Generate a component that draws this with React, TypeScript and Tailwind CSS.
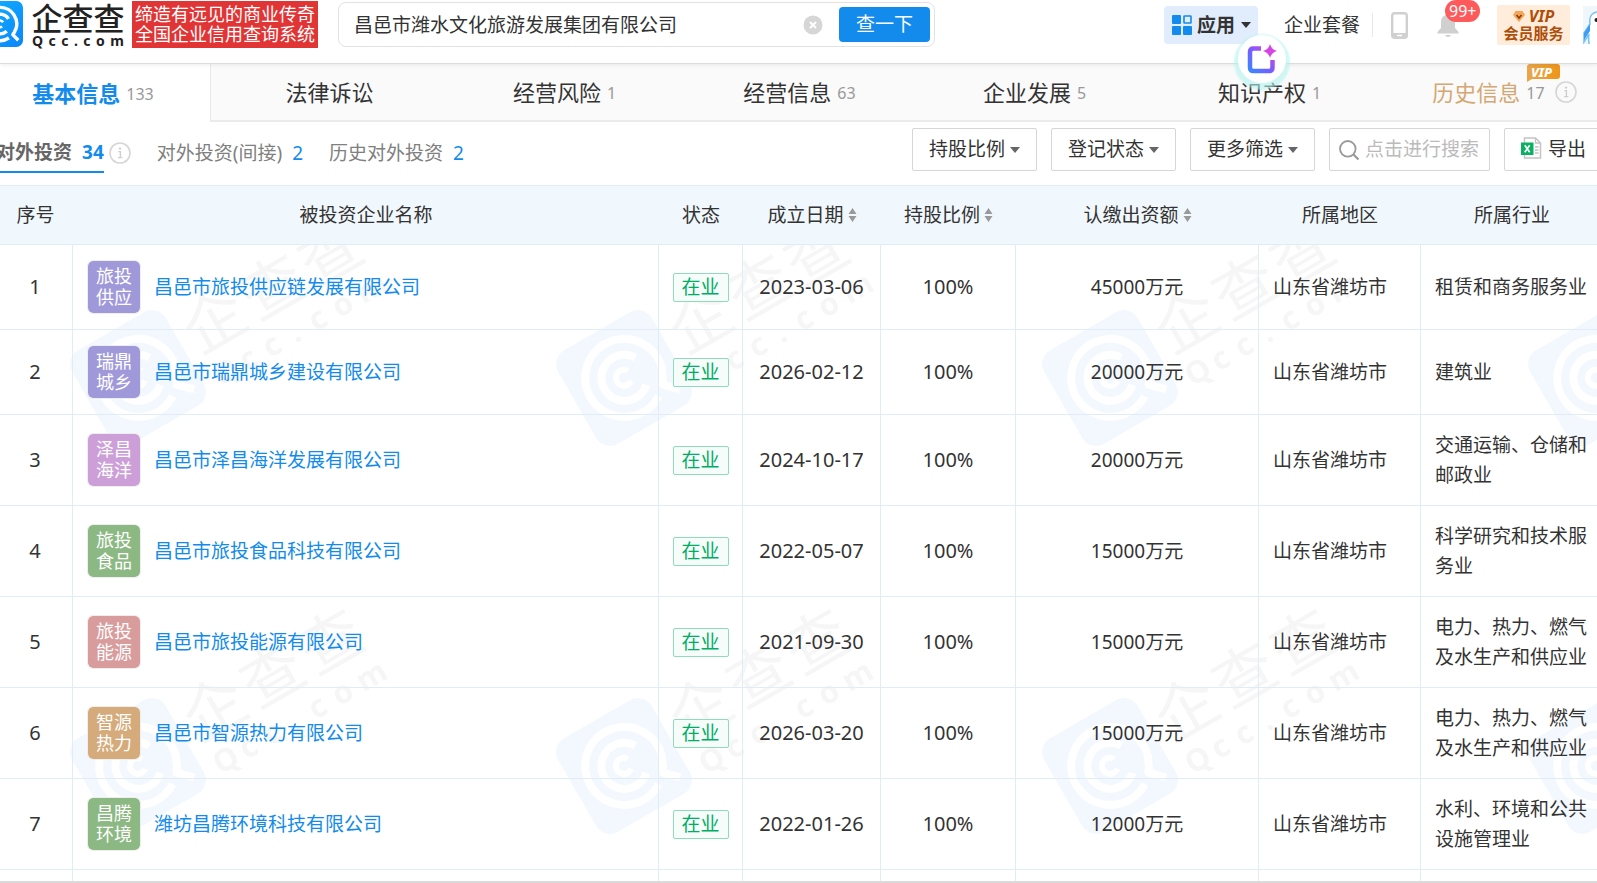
import type { ReactNode } from "react";

const tabs = [
  { name: "基本信息", count: "133" },
  { name: "法律诉讼", count: "" },
  { name: "经营风险", count: "1" },
  { name: "经营信息", count: "63" },
  { name: "企业发展", count: "5" },
  { name: "知识产权", count: "1" },
  { name: "历史信息", count: "17" },
];

const filters = ["持股比例", "登记状态", "更多筛选"];

const columns = [
  { name: "序号", width: "w-[73px]", sortable: false },
  { name: "被投资企业名称", width: "", sortable: false },
  { name: "状态", width: "w-[84px]", sortable: false },
  { name: "成立日期", width: "w-[138px]", sortable: true },
  { name: "持股比例", width: "w-[135px]", sortable: true },
  { name: "认缴出资额", width: "w-[243px]", sortable: true },
  { name: "所属地区", width: "w-[162px]", sortable: false },
  { name: "所属行业", width: "w-[176px]", sortable: false },
];

const companies = [
  { short: ["旅投", "供应"], color: "bg-[#9f99da]", name: "昌邑市旅投供应链发展有限公司", date: "2023-03-06", amount: "45000万元", industry: "租赁和商务服务业" },
  { short: ["瑞鼎", "城乡"], color: "bg-[#9f99da]", name: "昌邑市瑞鼎城乡建设有限公司", date: "2026-02-12", amount: "20000万元", industry: "建筑业" },
  { short: ["泽昌", "海洋"], color: "bg-[#cc9fd8]", name: "昌邑市泽昌海洋发展有限公司", date: "2024-10-17", amount: "20000万元", industry: "交通运输、仓储和邮政业" },
  { short: ["旅投", "食品"], color: "bg-[#8cb883]", name: "昌邑市旅投食品科技有限公司", date: "2022-05-07", amount: "15000万元", industry: "科学研究和技术服务业" },
  { short: ["旅投", "能源"], color: "bg-[#d99c9c]", name: "昌邑市旅投能源有限公司", date: "2021-09-30", amount: "15000万元", industry: "电力、热力、燃气及水生产和供应业" },
  { short: ["智源", "热力"], color: "bg-[#d5ab7b]", name: "昌邑市智源热力有限公司", date: "2026-03-20", amount: "15000万元", industry: "电力、热力、燃气及水生产和供应业" },
  { short: ["昌腾", "环境"], color: "bg-[#8cb883]", name: "潍坊昌腾环境科技有限公司", date: "2022-01-26", amount: "12000万元", industry: "水利、环境和公共设施管理业" },
];

// Rings of the brand mark, drawn around 0,0 in a 108 unit square
const LogoMark = ({ fill, line }: { fill: string; line: string }) => (
  <g fill="none" stroke={line}>
    <rect x="-54" y="-54" width="108" height="108" rx="16" fill={fill} stroke="none" />
    <path d="M21 33 A39 39 0 1 1 37 13" strokeWidth="8" />
    <path d="M37 11 A39 39 0 0 1 30 25 L43 38" strokeWidth="8" strokeLinejoin="round" />
    <path d="M20 -12 A23 23 0 1 0 16 17" strokeWidth="8" />
    <path d="M7 -4 A8 8 0 1 0 5 6" strokeWidth="6" />
  </g>
);

const Watermark = () => (
  <svg className="absolute inset-0 size-full" aria-hidden="true">
    <defs>
      <pattern id="mark" x="60" y="-9" width="486" height="388" patternUnits="userSpaceOnUse">
        <g transform="translate(78 202) rotate(-30)">
          <LogoMark fill="#f2f8fe" line="#ffffff" />
          <g fill="#f6f6f6">
            <text x="64 131 198" y="11" fontSize="62">企查查</text>
            <text x="67 97 124 154 177 204 232" y="49" fontSize="31" fontWeight="700">Qcc.com</text>
          </g>
        </g>
      </pattern>
    </defs>
    <rect width="100%" height="100%" fill="url(#mark)" />
  </svg>
);

const Caret = ({ className }: { className: string }) => (
  <svg viewBox="0 0 10 6" className={`h-1.5 w-2.5 ${className}`} aria-hidden="true">
    <path d="M0 0H10L5 6Z" fill="currentColor" />
  </svg>
);

const InfoIcon = () => (
  <svg viewBox="0 0 22 22" className="size-[22px] shrink-0" aria-hidden="true">
    <circle cx="11" cy="11" r="10" fill="none" stroke="#d6d6d6" strokeWidth="1.6" />
    <circle cx="11" cy="6.6" r="1.2" fill="#cfcfcf" />
    <path d="M9.3 9.6H11.4V15.5M9 15.6H13.4" fill="none" stroke="#cfcfcf" strokeWidth="1.4" />
  </svg>
);

const SortIcon = () => (
  <svg viewBox="0 0 9 14" className="h-3.5 w-[9px]" aria-hidden="true">
    <path d="M4.5 0L8.5 6H.5ZM4.5 14L8.5 8H.5Z" fill="#999" />
  </svg>
);

const Divider = () => <span className="h-6 w-px bg-[#e8e8e8]" />;

const Header = () => (
  <header className="relative z-10 flex h-16 items-start border-b border-[#dcdcdc] bg-white shadow-[0_1px_4px_rgba(0,0,0,0.08)]">
    <a href="#home" className="flex shrink-0" aria-label="企查查">
      <svg viewBox="0 -54 54 108" className="mt-px h-[46px] w-[23px]">
        <defs>
          <linearGradient id="brand" x1="0" y1="0" x2="1" y2="1">
            <stop offset="0" stopColor="#12b4ff" />
            <stop offset="1" stopColor="#0a86fb" />
          </linearGradient>
        </defs>
        <LogoMark fill="url(#brand)" line="#ffffff" />
      </svg>
      <span className="ml-[7px] flex w-24 flex-col whitespace-nowrap text-[#222]">
        <span className="pt-0.5 text-center text-[31px] leading-8 font-medium">企查查</span>
        <span className="flex justify-between px-0.5 text-[14px] leading-[14px] font-bold">
          {"Qcc.com".split("").map((letter, i) => (
            <span key={i}>{letter}</span>
          ))}
        </span>
      </span>
      <span className="mt-px ml-1.5 flex h-[47px] w-[186px] flex-col items-center justify-center bg-[#e13434] pb-0.5 text-[18px] leading-5 text-white">
        <span>缔造有远见的商业传奇</span>
        <span>全国企业信用查询系统</span>
      </span>
    </a>

    <form className="mt-0.5 ml-5 flex h-[45px] w-[597px] shrink-0 items-center rounded-lg border border-[#e2e2e2] pr-1 pl-[15px]">
      <input aria-label="搜索企业" defaultValue="昌邑市潍水文化旅游发展集团有限公司" className="min-w-0 flex-1 pt-0.5 text-[19px] text-[#333] outline-none" />
      <button type="button" aria-label="清空" className="mr-4">
        <svg viewBox="0 0 20 20" className="size-5">
          <circle cx="10" cy="10" r="9.5" fill="#d6d6d6" />
          <path d="M7 7L13 13M13 7L7 13" stroke="#fff" strokeWidth="2" />
        </svg>
      </button>
      <button type="button" className="h-[35px] w-[91px] rounded bg-[#128bed] text-[19px] text-white">查一下</button>
    </form>

    <nav className="ml-auto flex h-[50px] shrink-0 items-center">
      <button type="button" className="flex h-[38px] w-[94px] items-center rounded bg-[#e1edfd] pl-2 text-[19px] font-bold text-[#333]">
        <svg viewBox="0 0 20 20" className="mr-[5px] size-5" fill="#128bed" aria-hidden="true">
          <rect width="9" height="9" rx="1" />
          <rect x="12" y="1" width="7" height="7" rx="0.5" fill="none" stroke="#128bed" strokeWidth="1.6" />
          <rect y="11" width="9" height="9" rx="1" />
          <rect x="11" y="11" width="9" height="9" rx="1" />
        </svg>
        应用
        <Caret className="ml-1.5" />
      </button>
      <span className="ml-3.5"><Divider /></span>
      <a href="#plan" className="mx-3 text-[19px] text-[#333]">企业套餐</a>
      <Divider />
      <button type="button" aria-label="手机版" className="ml-[18px]">
        <svg viewBox="0 0 17 27" className="h-[27px] w-[17px]" aria-hidden="true">
          <rect x="1.2" y="1.2" width="14.6" height="24.6" rx="2.6" fill="none" stroke="#d0d0d0" strokeWidth="2.4" />
          <path d="M1 21H16V26H1Z" fill="#d0d0d0" />
          <path d="M6 23.5H11" stroke="#fff" strokeWidth="1.5" />
        </svg>
      </button>
      <button type="button" aria-label="消息" className="relative ml-[29px]">
        <svg viewBox="0 0 22 24" className="h-6 w-[22px]" fill="#d0d0d0" aria-hidden="true">
          <path d="M11 0C12 0 12.6 .8 12.6 1.8C16 2.6 18 5.4 18 9V15L21.5 19V20.5H.5V19L4 15V9C4 5.4 6 2.6 9.4 1.8C9.4 .8 10 0 11 0ZM8 22H14C13.5 23.3 12.5 24 11 24S8.5 23.3 8 22Z" />
        </svg>
        <span className="absolute -top-[13px] left-2 rounded-full bg-[#fe5a5c] px-1 text-[16px] leading-[22px] text-white">99+</span>
      </button>
      <span className="ml-[26px]"><Divider /></span>
      <a href="#vip" className="ml-3 flex h-10 w-[73px] flex-col items-center justify-center rounded-xs bg-[#ffecda] text-[15px] leading-[17px] font-bold text-[#ad4e0a]">
        <span className="flex items-center gap-1 text-[16px] italic">
          <svg viewBox="0 0 12 11" className="h-[11px] w-3" aria-hidden="true">
            <path d="M2.5 0H9.5L12 4L6 11L0 4Z" fill="#f5a55a" />
            <path d="M3.5 4L6 7L8.5 4" fill="none" stroke="#8c3c05" strokeWidth="1.6" />
          </svg>
          VIP
        </span>
        <span>会员服务</span>
      </a>
      <svg viewBox="0 0 14 38" className="ml-[13px] h-[38px] w-3.5" aria-hidden="true">
        <rect width="14" height="38" fill="#f0f7fb" />
        <path d="M14 6C8 7 6 12 7 18L1 27L0 36L6 28C6 34 7 36 8 38H14Z" fill="#fff" />
        <path d="M14 6C8 7 6 12 7 18L1 27V36L6 28C5 32 6 36 6 38" fill="none" stroke="#7cc3f6" strokeWidth="1.6" />
        <path d="M1 27L7 18V25L1 34Z" fill="#3d9df0" />
        <circle cx="13.5" cy="14" r="2" fill="#222" />
      </svg>
    </nav>

    {/* floating assistant */}
    <button type="button" aria-label="智能助手" className="absolute top-[35px] right-[311px] flex size-12 items-center justify-center rounded-full bg-white shadow-[0_3px_2px_4px_rgba(178,243,238,0.6)]">
      <svg viewBox="0 0 30 30" className="size-[30px]" aria-hidden="true">
        <defs>
          <linearGradient id="assist" x1="0" y1="1" x2="1" y2="0">
            <stop offset="0" stopColor="#3a86ff" />
            <stop offset="0.5" stopColor="#7a5cff" />
            <stop offset="1" stopColor="#e83ed8" />
          </linearGradient>
        </defs>
        <path d="M14 4.5H6.5Q3 4.5 3 8V23.5Q3 27 6.5 27H22Q25.5 27 25.5 23.5V16" fill="none" stroke="url(#assist)" strokeWidth="4.5" />
        <path d="M23 0Q24.5 5.5 30 7Q24.5 8.5 23 14Q21.5 8.5 16 7Q21.5 5.5 23 0Z" fill="#d744e6" />
      </svg>
    </button>
  </header>
);

const Tabs = () => (
  <nav className="overflow-hidden">
    <div className="-mx-6 grid grid-cols-7">
      {tabs.map((tab, i) => {
        const active = i === 0;
        const history = i === tabs.length - 1;
        return (
          <a
            key={tab.name}
            href={`#tab-${i}`}
            className={`flex h-[58px] items-center justify-center gap-1.5 text-[22px] ${
              active ? "border-r border-[#e8e8e8] font-bold text-[#128bed]" : "border-b-2 border-[#ebebeb] bg-[#fafafa] pl-0.5"
            } ${history ? "text-[#d3a873]" : active ? "" : "text-[#333]"}`}
          >
            {tab.name}
            {tab.count && <span className="pt-0.5 text-[16px] font-normal text-[#999]">{tab.count}</span>}
            {history && (
              <span className="relative ml-1 flex">
                <InfoIcon />
                <svg viewBox="0 0 33 18" className="absolute -top-[17px] -left-7 h-[18px] w-[33px]" aria-label="VIP">
                  <defs>
                    <linearGradient id="gold">
                      <stop offset="0" stopColor="#e9a64b" />
                      <stop offset="1" stopColor="#ee9519" />
                    </linearGradient>
                  </defs>
                  <path d="M3 0H30Q33 0 33 3V12Q33 15 30 15H5L0 18V3Q0 0 3 0Z" fill="url(#gold)" />
                  <text x="4" y="12.5" fontSize="13" fontWeight="800" fontStyle="italic" fill="#fff">VIP</text>
                </svg>
              </span>
            )}
          </a>
        );
      })}
    </div>
  </nav>
);

const Toolbar = () => (
  <div className="flex h-[63px] items-start justify-between overflow-hidden text-[19px] whitespace-nowrap text-[#808080]">
    <div className="-ml-1 flex pt-3">
      <a href="#direct" className="flex h-[39px] items-center gap-2.5 border-b-2 border-[#128bed] font-bold text-[#666]">
        对外投资 <span className="text-[#128bed]">34</span>
      </a>
      <span className="mt-2 ml-[5px]"><InfoIcon /></span>
      <a href="#indirect" className="ml-[26px] flex h-[39px] items-center gap-2.5">
        对外投资(间接) <span className="text-[#128bed]">2</span>
      </a>
      <a href="#history" className="ml-[26px] flex h-[39px] items-center gap-2.5">
        历史对外投资 <span className="text-[#128bed]">2</span>
      </a>
    </div>
    <div className="-mr-2 flex gap-3.5 pt-1.5 text-[#333]">
      {filters.map((filter) => (
        <button key={filter} type="button" className="flex h-[43px] items-center gap-[5px] rounded-xs border border-[#d6d6d6] px-4 text-[#333]">
          {filter}
          <Caret className="text-[#666]" />
        </button>
      ))}
      <label className="flex h-[43px] w-[161px] items-center rounded-xs border border-[#d6d6d6] pl-[9px]">
        <svg viewBox="0 0 20 20" className="mr-1.5 size-5 shrink-0" fill="none" stroke="#999" strokeWidth="1.8" aria-hidden="true">
          <circle cx="8.8" cy="8.8" r="7.8" />
          <path d="M14.5 14.5L19.5 19.5" strokeWidth="2.2" />
        </svg>
        <input aria-label="点击进行搜索" placeholder="点击进行搜索" className="min-w-0 flex-1 outline-none placeholder:text-[#bbb]" />
      </label>
      <button type="button" className="flex h-[43px] w-[101px] items-center gap-1.5 rounded-xs border border-[#d6d6d6] pl-4">
        <svg viewBox="0 0 21 22" className="-mt-1 h-[22px] w-[21px]" aria-hidden="true">
          <path d="M3.5 1H14.5L19.5 6V21H3.5Z" fill="#fff" stroke="#c4c4c4" strokeWidth="1.5" />
          <path d="M14.5 1V6H19.5M14 10H17.5M14 13H17.5M14 16H17.5" fill="none" stroke="#c4c4c4" strokeWidth="1.3" />
          <rect y="5.5" width="12.5" height="12.5" fill="#0bb063" />
          <path d="M3.8 8.3L8.7 15.2M8.7 8.3L3.8 15.2" stroke="#fff" strokeWidth="1.7" />
        </svg>
        导出
      </button>
    </div>
  </div>
);

const Cell = ({ className = "", children }: { className?: string; children?: ReactNode }) => (
  <td className={`border-r border-b border-[#e0ecf7] last:border-r-0 ${className}`}>{children}</td>
);

const InvestmentTable = () => (
  <div className="relative min-h-0 flex-1 overflow-hidden border-b-2 border-[#dadada]">
    <Watermark />
    <table className="relative w-full table-fixed border-separate border-spacing-0 text-[19px] leading-[30px] text-[#333]">
      <thead>
        <tr className="h-[60px]">
          {columns.map((col) => (
            <th key={col.name} className={`border-y border-[#e0ecf7] bg-[#f1f8fd] p-0 font-normal first:pr-0.5 last:pl-1.5 ${col.width}`}>
              {col.sortable ? (
                <button type="button" className="inline-flex items-center gap-1">
                  {col.name}
                  <SortIcon />
                </button>
              ) : (
                col.name
              )}
            </th>
          ))}
        </tr>
      </thead>
      <tbody>
        {companies.map((company, i) => (
          <tr key={company.name}>
            <Cell className="pr-0.5 text-center text-[20px]">{i + 1}</Cell>
            <Cell className="px-3.5 py-[15px]">
              <div className="flex items-center gap-[13px]">
                <span className={`flex size-[54px] shrink-0 flex-col items-center justify-center rounded-md border border-[#eee] bg-clip-padding text-[18px] leading-[21px] text-white ${company.color}`}>
                  {company.short.map((line) => (
                    <span key={line}>{line}</span>
                  ))}
                </span>
                <a href="#company" className="text-[#128bed]">{company.name}</a>
              </div>
            </Cell>
            <Cell>
              <span className="mx-auto block h-[29px] w-14 rounded-xs border border-[#8edcb9] bg-[#f6fcf9] text-center leading-[27px] text-[#00ad65]">在业</span>
            </Cell>
            <Cell className="text-center text-[20px]">{company.date}</Cell>
            <Cell className="text-center text-[20px]">100%</Cell>
            <Cell className="text-center">{company.amount}</Cell>
            <Cell className="px-3.5">山东省潍坊市</Cell>
            <Cell className="py-[15px] pr-2.5 pl-3.5">{company.industry}</Cell>
          </tr>
        ))}
        <tr className="h-[85px]">
          {columns.map((col) => (
            <Cell key={col.name} />
          ))}
        </tr>
      </tbody>
    </table>
  </div>
);

export default function App() {
  return (
    <div className="flex h-screen flex-col overflow-hidden bg-white font-['Noto_Sans','Noto_Sans_CJK_SC',sans-serif]">
      <Header />
      <Tabs />
      <Toolbar />
      <InvestmentTable />
    </div>
  );
}
